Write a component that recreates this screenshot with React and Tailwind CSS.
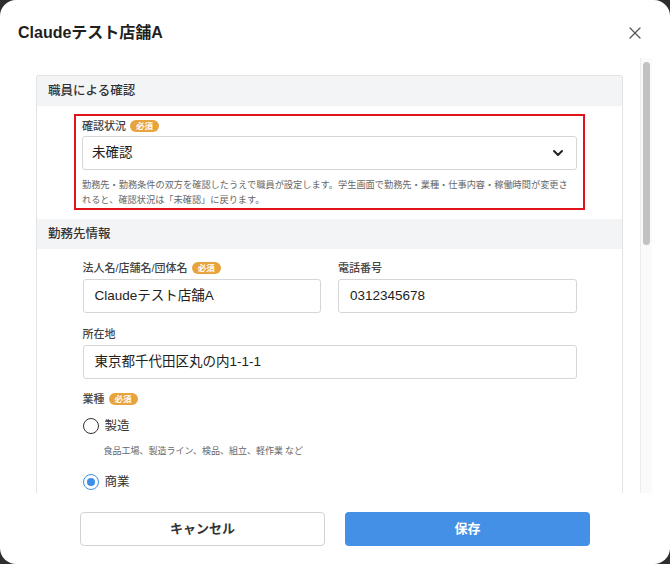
import React from 'react'
import { X, ChevronDown } from 'lucide-react'

const Badge = () => (
  <span className="ml-[4px] inline-flex h-[12px] items-center rounded-full bg-[#e8a33c] px-[6px] text-[8.5px] font-bold leading-none text-white">
    必須
  </span>
)

const Label = ({ children, required }) => (
  <div className="flex h-[14px] items-center text-[11px] font-medium leading-[14px] text-[#444]">
    {children}
    {required && <Badge />}
  </div>
)

const Field = ({ value }) => (
  <div className="flex h-[34px] items-center rounded-[3px] border border-[#d6d6d6] bg-white px-[11px] text-[13.5px] text-[#222]">
    {value}
  </div>
)

const SectionHead = ({ children }) => (
  <div className="flex h-[30px] items-center bg-[#f3f4f6] px-[11px] text-[12.5px] font-medium text-[#333]">
    {children}
  </div>
)

const Radio = ({ checked, label }) => (
  <div className="flex h-[20px] items-center gap-[6px]">
    {checked ? (
      <span className="flex h-[16px] w-[16px] items-center justify-center rounded-full border-[1.5px] border-[#3d8ee6] bg-white">
        <span className="h-[8px] w-[8px] rounded-full bg-[#3d8ee6]"></span>
      </span>
    ) : (
      <span className="h-[16px] w-[16px] rounded-full border-[1.5px] border-[#333] bg-white"></span>
    )}
    <span className="text-[12.5px] text-[#333]">{label}</span>
  </div>
)

export default function App() {
  return (
    <div className="h-[564px] w-[670px] bg-[#2e2e2e] font-['Liberation_Sans','Noto_Sans_CJK_JP',sans-serif]">
      <div className="flex h-full flex-col overflow-hidden rounded-[16px] bg-white">
        {/* header */}
        <div className="flex h-[58px] shrink-0 items-center justify-between pl-[18px] pr-[25px] pt-[8px]">
          <h1 className="text-[16px] font-bold text-[#1f1f1f]">Claudeテスト店舗A</h1>
          <X size={20} strokeWidth={1.5} className="text-[#555]" />
        </div>

        {/* body */}
        <div className="flex min-h-0 flex-1">
          <div className="min-w-0 flex-1 overflow-hidden pl-[36px] pr-[17px] pt-[17px]">
            <div className="rounded-t-[2px] border border-[#e3e3e3]">
              <SectionHead>職員による確認</SectionHead>

              <div className="mx-auto mt-[8px] w-[511px] border-2 border-[#e0121b] px-[6px] pt-[3px]">
                <Label required>確認状況</Label>
                <div className="mt-[3px] flex h-[34px] items-center justify-between rounded-[3px] border border-[#d6d6d6] bg-white pl-[9px] pr-[10px] text-[13.5px] text-[#222]">
                  <span>未確認</span>
                  <ChevronDown size={16} strokeWidth={3} className="text-[#222]" />
                </div>
                <p className="mt-[7px] pb-[1px] font-['Noto_Sans_CJK_JP',sans-serif] text-[9.2px] leading-[15px] text-[#666]">
                  勤務先・勤務条件の双方を確認したうえで職員が設定します。学生画面で勤務先・業種・仕事内容・稼働時間が変更さ
                  <br />
                  れると、確認状況は「未確認」に戻ります。
                </p>
              </div>

              <div className="mt-[9px]">
                <SectionHead>勤務先情報</SectionHead>
              </div>

              <div className="mx-auto w-[494px] pb-[8px]">
                <div className="mt-[12px] grid grid-cols-2 gap-x-[17px]">
                  <div>
                    <Label required>法人名/店舗名/団体名</Label>
                    <div className="mt-[4px]">
                      <Field value="Claudeテスト店舗A" />
                    </div>
                  </div>
                  <div>
                    <Label>電話番号</Label>
                    <div className="mt-[4px]">
                      <Field value="0312345678" />
                    </div>
                  </div>
                </div>

                <div className="mt-[14px]">
                  <Label>所在地</Label>
                  <div className="mt-[4px]">
                    <Field value="東京都千代田区丸の内1-1-1" />
                  </div>
                </div>

                <div className="mt-[13px]">
                  <Label required>業種</Label>
                  <div className="mt-[10px]">
                    <Radio label="製造" />
                  </div>
                  <p className="mt-[8px] pl-[21px] font-['Noto_Sans_CJK_JP',sans-serif] text-[9px] leading-[14px] text-[#666]">
                    食品工場、製造ライン、検品、組立、軽作業 など
                  </p>
                  <div className="mt-[14px]">
                    <Radio checked label="商業" />
                  </div>
                </div>
              </div>
            </div>
          </div>

          {/* scrollbar */}
          <div className="mr-[18px] w-[12px] shrink-0 border-l border-[#ececec] bg-[#fafafa] px-[2px] pt-[4px]">
            <div className="h-[183px] rounded-full bg-[#c2c2c2]"></div>
          </div>
        </div>

        {/* footer */}
        <div className="grid h-[71px] shrink-0 grid-cols-2 gap-x-[20px] px-[80px] pt-[19px]">
          <button className="h-[34px] rounded-[4px] border border-[#d2d2d2] bg-white text-[13px] font-bold text-[#333]">
            キャンセル
          </button>
          <button className="h-[34px] rounded-[4px] bg-[#4390e6] text-[13px] font-bold text-white">
            保存
          </button>
        </div>
      </div>
    </div>
  )
}
